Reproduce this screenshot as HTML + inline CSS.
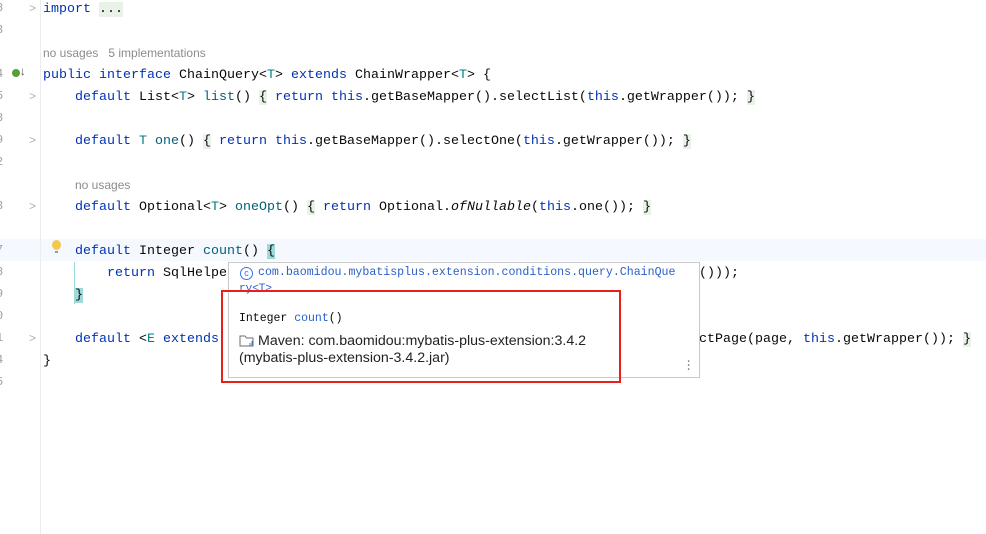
<!DOCTYPE html>
<html><head><style>
body{margin:0;width:986px;height:534px;background:#fff;overflow:hidden;position:relative;font-family:"Liberation Mono",monospace;font-size:13.33px;color:#080808}
.ln{position:absolute;left:-4px;width:10px;color:#a0a0a0;font-size:12px}
.gut{position:absolute;left:40px;top:0;width:1px;height:534px;background:#ebecf0}
.l{position:absolute;left:43px;height:22px;line-height:22px;white-space:pre}
.k{color:#0033b3}.t{color:#007e8a}.m{color:#00627a}.h{background:#e8f2e6}.c{background:#9fdada}
.hint{font-family:"Liberation Sans",sans-serif;font-size:12px;color:#8c8c8c}
.fold{position:absolute;left:29px;color:#b0b0b0;font-family:"Liberation Sans",sans-serif;font-size:12px}
</style></head><body>
<div style="position:absolute;left:0;top:239px;width:986px;height:22px;background:#f5f8fe"></div>
<div class="gut"></div>
<div class="ln" style="top:1px">8</div><div class="ln" style="top:23px">3</div><div class="ln" style="top:67px">4</div><div class="ln" style="top:89px">5</div><div class="ln" style="top:111px">8</div><div class="ln" style="top:133px">9</div><div class="ln" style="top:155px">2</div><div class="ln" style="top:199px">3</div><div class="ln" style="top:243px">7</div><div class="ln" style="top:265px">8</div><div class="ln" style="top:287px">9</div><div class="ln" style="top:309px">0</div><div class="ln" style="top:331px">1</div><div class="ln" style="top:353px">4</div><div class="ln" style="top:375px">5</div>
<div class="fold" style="top:1px">&gt;</div><div class="fold" style="top:89px">&gt;</div><div class="fold" style="top:133px">&gt;</div><div class="fold" style="top:199px">&gt;</div><div class="fold" style="top:331px">&gt;</div>
<div style="position:absolute;left:12px;top:69px;width:8px;height:8px;border-radius:50%;background:#5a9e3c"></div>
<div style="position:absolute;left:19px;top:65px;color:#555;font-size:12px">&#8595;</div>
<div style="position:absolute;left:52px;top:240px;width:9px;height:10px;border-radius:50%;background:#f2c94c"></div>
<div style="position:absolute;left:55px;top:251px;width:3px;height:2px;background:#999"></div>
<div style="position:absolute;left:74px;top:262px;width:1px;height:42px;background:#9fdada"></div>

<div class="l" style="top:-1px"><span class="k">import</span> <span class="h">...</span></div>
<div class="l hint" style="top:42px">no usages &nbsp;&nbsp;5 implementations</div>
<div class="l" style="top:65px"><span class="k">public interface</span> ChainQuery&lt;<span class="t">T</span>&gt; <span class="k">extends</span> ChainWrapper&lt;<span class="t">T</span>&gt; {</div>
<div class="l" style="top:87px">    <span class="k">default</span> List&lt;<span class="t">T</span>&gt; <span class="m">list</span>() <span class="h">{</span> <span class="k">return this</span>.getBaseMapper().selectList(<span class="k">this</span>.getWrapper()); <span class="h">}</span></div>
<div class="l" style="top:131px">    <span class="k">default</span> <span class="t">T</span> <span class="m">one</span>() <span class="h">{</span> <span class="k">return this</span>.getBaseMapper().selectOne(<span class="k">this</span>.getWrapper()); <span class="h">}</span></div>
<div class="l hint" style="top:174px;left:75px">no usages</div>
<div class="l" style="top:197px">    <span class="k">default</span> Optional&lt;<span class="t">T</span>&gt; <span class="m">oneOpt</span>() <span class="h">{</span> <span class="k">return</span> Optional.<i>ofNullable</i>(<span class="k">this</span>.one()); <span class="h">}</span></div>
<div class="l" style="top:241px">    <span class="k">default</span> Integer <span class="m">count</span>() <span class="c">{</span></div>
<div class="l" style="top:263px">        <span class="k">return</span> SqlHelper</div>
<div class="l" style="top:263px;left:699px">()));</div>
<div class="l" style="top:285px">    <span class="c">}</span></div>
<div class="l" style="top:329px">    <span class="k">default</span> &lt;<span class="t">E</span> <span class="k">extends</span></div>
<div class="l" style="top:329px;left:699px">ctPage(page, <span class="k">this</span>.getWrapper()); <span class="h">}</span></div>
<div class="l" style="top:351px">}</div>

<div style="position:absolute;left:228px;top:262px;width:470px;height:114px;background:#fff;border:1px solid #c9c9c9">
<div style="position:absolute;left:11px;top:4px;width:11px;height:11px;border:1px solid #3574f0;border-radius:50%;color:#3574f0;font-size:9px;line-height:11px;text-align:center;font-family:'Liberation Sans',sans-serif">c</div>
<div style="position:absolute;left:29px;top:3px;font-size:11.6px;color:#2a5fc9;white-space:pre">com.baomidou.mybatisplus.extension.conditions.query.ChainQue</div>
<div style="position:absolute;left:10px;top:20px;font-size:11px;color:#2a5fc9">ry&lt;T&gt;</div>
<div style="position:absolute;left:10px;top:49px;font-size:11.5px">Integer <span style="color:#2a5fc9">count</span>()</div>
<svg style="position:absolute;left:10px;top:71px" width="16" height="14" viewBox="0 0 16 14"><path d="M1 2h5l1.5 2H14v8H1z" fill="none" stroke="#6e6e6e" stroke-width="1"/><path d="M11 9v3M13 7v5" stroke="#3574f0" stroke-width="1"/></svg>
<div style="position:absolute;left:10px;top:70px;font-family:'Liberation Sans',sans-serif;font-size:14.2px;line-height:17px;color:#222"><span style="padding-left:19px">Maven: com.baomidou:mybatis-plus-extension:3.4.2</span><br>(mybatis-plus-extension-3.4.2.jar)</div>
<div style="position:absolute;left:456px;top:94px;color:#888;font-size:12px;line-height:4px">.<br>.<br>.</div>
</div>
<div style="position:absolute;left:221px;top:290px;width:396px;height:89px;border:2px solid #e8201c"></div>
</body></html>
